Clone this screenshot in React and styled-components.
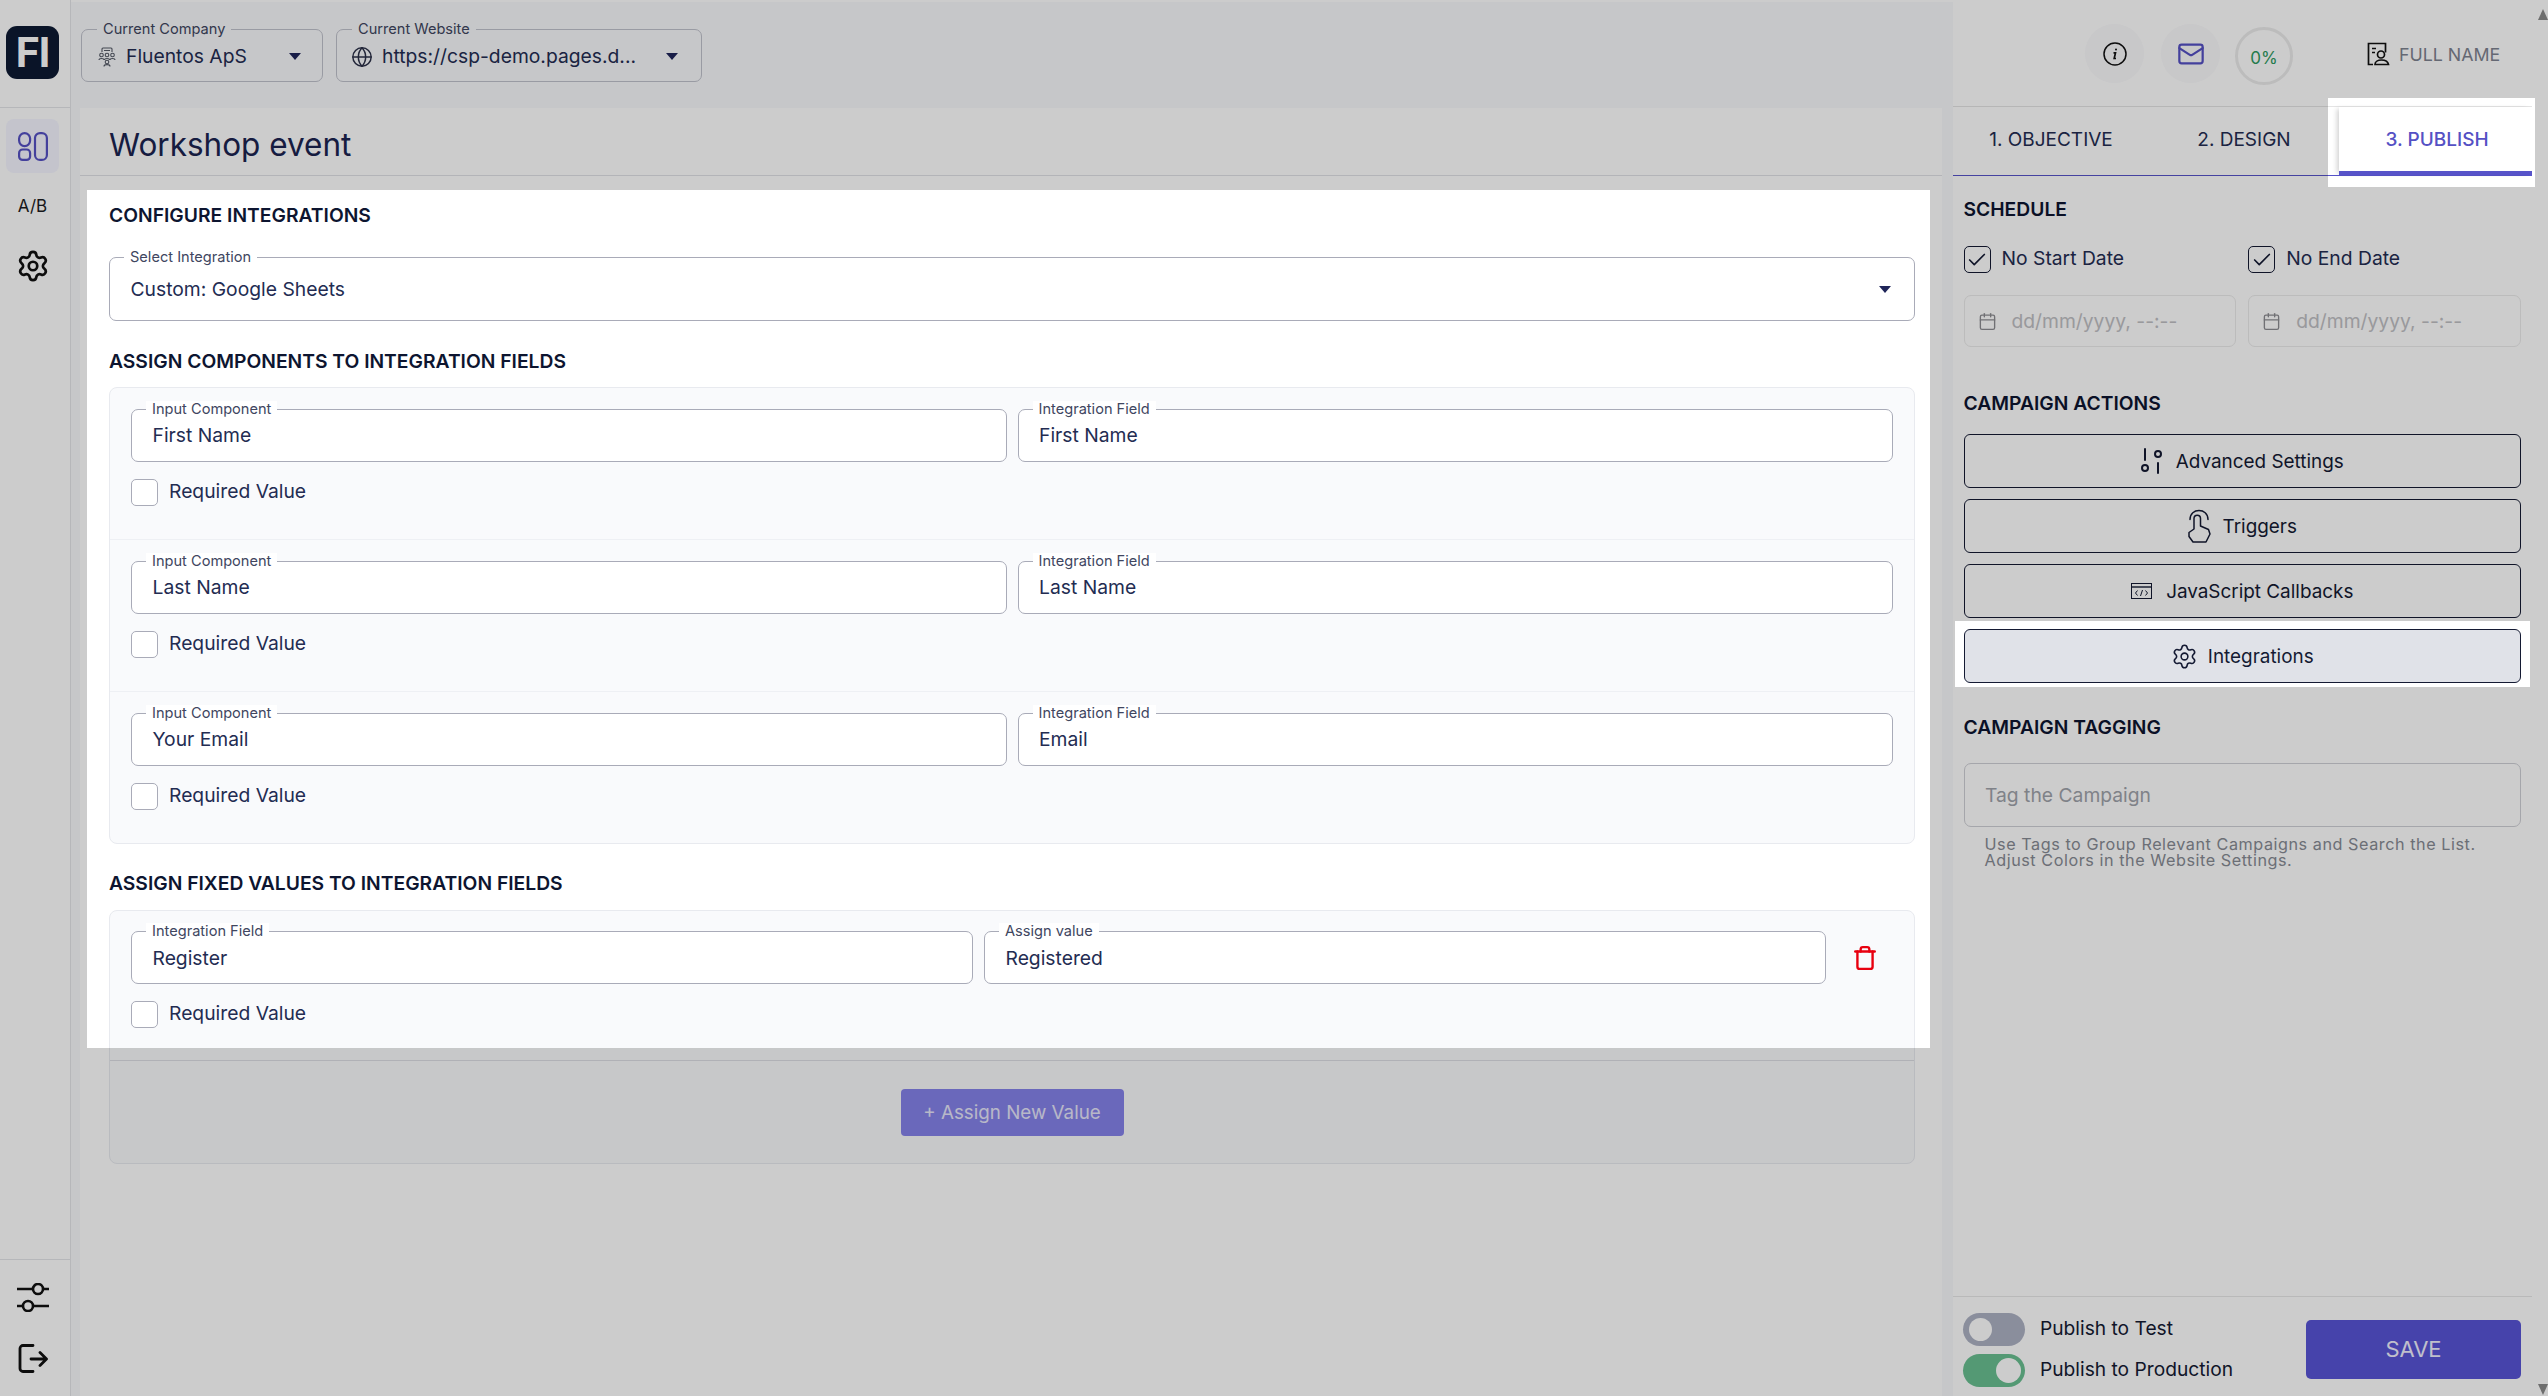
import React from 'react'
import styled, { createGlobalStyle } from 'styled-components'
import { Settings, Globe, Calendar, Mail, Trash, Check } from 'lucide-react'

const GlobalStyle = createGlobalStyle`
  html, body {
    margin: 0;
    padding: 0;
    width: 2548px;
    height: 1396px;
    overflow: hidden;
    background: #fff;
    font-family: Inter, "Noto Sans", sans-serif;
    color: #232c52;
  }
  * { box-sizing: border-box; }
`

const Page = styled.div`
  display: flex;
  width: 2548px;
  height: 1396px;
`

const Dimmer = styled.div`
  position: fixed;
  inset: 0;
  background: rgba(0, 0, 0, 0.2);
  pointer-events: none;
  clip-path: path(evenodd, "M0 0H2548V1396H0Z M87 190H1930V1048H87Z M2328 98H2535V187H2328Z M1955 621H2530V687H1955Z");
`

/* left rail */
const Rail = styled.nav`
  width: 71px;
  flex: none;
  display: flex;
  flex-direction: column;
  background: #fff;
  border-right: 1px solid #e4e5e9;
`

const LogoRow = styled.div`
  height: 108px;
  padding: 26px 0 0 6px;
  border-bottom: 1px solid #e4e5e9;
`

const Logo = styled.div`
  width: 53px;
  height: 53px;
  border-radius: 11px;
  background: #0d1a33;
  color: #fff;
  font-size: 41px;
  font-weight: 700;
  line-height: 53px;
  text-align: center;
  letter-spacing: -1px;
`

const RailItems = styled.div`
  flex: 1;
  display: flex;
  flex-direction: column;
  align-items: flex-start;
  padding: 11px 0 0 6px;
`

const RailButton = styled.div`
  width: 53px;
  height: ${p => p.$h || 54}px;
  margin-bottom: ${p => p.$mb || 0}px;
  display: flex;
  align-items: center;
  justify-content: center;
  border-radius: 8px;
  background: ${p => (p.$active ? '#f5f6ff' : 'transparent')};
  color: #1c1c22;
  font-size: 17px;
`

const RailBottom = styled.div`
  height: 137px;
  display: flex;
  flex-direction: column;
  align-items: center;
  gap: 32px;
  padding: 23px 4px 0 0;
  border-top: 1px solid #e4e5e9;
`

/* middle column */
const Middle = styled.div`
  flex: none;
  width: 1882px;
  display: flex;
  flex-direction: column;
  margin-top: 2px;
  background: #f8f9fc;
`

const TopBar = styled.header`
  height: 106px;
  flex: none;
  display: flex;
  gap: 13px;
  padding: 27px 0 0 10px;
`

const Field = styled.div`
  position: relative;
  display: flex;
  align-items: center;
  width: ${p => p.$w || '100%'};
  height: ${p => p.$h || 53}px;
  padding-left: ${p => p.$pl || 20.5}px;
  border: 1.5px solid ${p => p.$line || '#a9abb8'};
  border-radius: 7px;
  background: ${p => p.$bg || '#fff'};
  font-size: 19.3px;
  color: #232c52;
`

const FieldLabel = styled.label`
  position: absolute;
  top: -9px;
  left: ${p => p.$left || 14}px;
  padding: 0 6px;
  background: ${p => p.$bg || '#fff'};
  font-size: 14.6px;
  line-height: 16px;
  color: #40465f;
`

const Caret = styled.span`
  position: absolute;
  right: ${p => p.$right}px;
  top: 50%;
  margin-top: -3px;
  border-left: 6.5px solid transparent;
  border-right: 6.5px solid transparent;
  border-top: 7.5px solid #1f2559;
`

const FieldIcon = styled.span`
  display: flex;
  margin-right: ${p => p.$mr}px;
  margin-top: 2px;
`

const Card = styled.main`
  flex: 1;
  margin: 0 11px 0 9px;
  background: #fff;
  min-height: 0;
`

const CardHead = styled.div`
  height: 68px;
  display: flex;
  align-items: center;
  padding: 5px 0 0 29px;
  border-bottom: 1px solid #e0e1e6;
`

const Title = styled.h1`
  margin: 0;
  font-size: 31.5px;
  font-weight: 400;
  color: #1b2450;
`

const CardBody = styled.div`
  padding: 0 27px 0 29px;
`

const SectionTitle = styled.h2`
  margin: ${p => p.$mt}px 0 ${p => p.$mb}px;
  font-size: 19.3px;
  line-height: 24px;
  font-weight: 600;
  color: #0d1530;
`

const Panel = styled.section`
  border: 1px solid #e8eaef;
  border-radius: 8px;
  background: #f9fafc;
`

const AssignRow = styled.div`
  padding: 20.5px 21px ${p => (p.$last ? 32 : 33.5)}px;
  border-bottom: ${p => (p.$divided ? '1px solid #eef0f4' : 'none')};
`

const PairGrid = styled.div`
  display: grid;
  grid-template-columns: ${p => p.$cols || '1fr 1fr'};
  gap: 11px;
  align-items: center;
  margin-bottom: 17px;
`

const TrashWrap = styled.button`
  display: flex;
  justify-content: center;
  padding: 0 0 0 2px;
  border: 0;
  background: none;
  color: #e8000f;
`

const CheckRow = styled.label`
  display: flex;
  align-items: center;
  gap: 11px;
  height: 27px;
  font-size: 19.3px;
  color: #232c52;
`

const CheckText = styled.span`
  margin-top: -2.5px;
`

const CheckBox = styled.span`
  width: 27px;
  height: 27px;
  flex: none;
  display: flex;
  align-items: center;
  justify-content: center;
  border: 1.5px solid ${p => (p.$on ? '#141a33' : '#a9abb8')};
  border-radius: 5px;
  background: ${p => (p.$on ? 'transparent' : '#fff')};
`

const AddArea = styled.div`
  display: flex;
  justify-content: center;
  padding: 28px 0 27px;
  border-top: 1px solid #dcdee4;
`

const AddButton = styled.button`
  width: 223px;
  height: 47px;
  border: 0;
  border-radius: 4px;
  background: #8582ea;
  color: #e6e6fa;
  font-family: inherit;
  font-size: 18.8px;
`

/* right column */
const Side = styled.aside`
  flex: none;
  width: 595px;
  display: flex;
  flex-direction: column;
  background: #fff;
  position: relative;
`

const SideTop = styled.div`
  height: 107px;
  flex: none;
  margin-right: 16px;
  padding: 24px 0 0 132px;
  display: flex;
  align-items: flex-start;
  border-bottom: 1.5px solid #e4e4e4;
`

const RoundIcon = styled.div`
  width: 59px;
  height: 59px;
  margin-right: 17px;
  display: flex;
  align-items: center;
  justify-content: center;
  border-radius: 50%;
  background: #fafafc;
`

const Progress = styled.div`
  width: 58px;
  height: 58px;
  margin: 3px 0 0 -2px;
  padding-top: 4px;
  display: flex;
  align-items: center;
  justify-content: center;
  border: 3px solid #ececec;
  border-radius: 50%;
  color: #2d9a60;
  font-size: 17px;
`

const UserBox = styled.div`
  margin: 18px 0 0 74px;
  display: flex;
  align-items: center;
  gap: 9px;
  font-size: 17.8px;
  color: #7e8290;
`

const Tabs = styled.div`
  height: 69px;
  flex: none;
  margin-right: 16px;
  display: grid;
  grid-template-columns: repeat(3, 1fr);
  border-bottom: 1.5px solid #5753c9;
`

const Tab = styled.div`
  display: flex;
  align-items: center;
  justify-content: center;
  padding-left: 3px;
  font-size: 19px;
  font-weight: ${p => (p.$active ? 500 : 400)};
  color: ${p => (p.$active ? '#5551c4' : '#232c52')};
  border-bottom: 4px solid ${p => (p.$active ? '#5753c9' : 'transparent')};
  box-shadow: ${p => (p.$active ? '-4px 0 5px -2px rgba(0, 0, 0, 0.18)' : 'none')};
`

const SideBody = styled.div`
  flex: 1;
  padding: 0 27px 0 10.5px;
`

const TwoCol = styled.div`
  display: grid;
  grid-template-columns: 1fr 1fr;
  gap: 12px;
  margin-bottom: ${p => p.$mb || 0}px;
`

const DateBox = styled.div`
  height: 52px;
  display: flex;
  align-items: center;
  gap: 15px;
  padding-left: 13px;
  border: 1.5px solid #ebebeb;
  border-radius: 7px;
  font-size: 19.3px;
  color: #c0c0c4;
`

const ActionList = styled.div`
  display: flex;
  flex-direction: column;
  gap: 11px;
`

const ActionButton = styled.button`
  height: 54px;
  display: flex;
  align-items: center;
  justify-content: center;
  gap: ${p => p.$gap || 14}px;
  padding-bottom: 1px;
  border: 1.5px solid #141a33;
  border-radius: 6px;
  background: ${p => (p.$active ? '#e0e2e8' : '#fff')};
  font-family: inherit;
  font-size: 18.9px;
  color: #141a33;
`

const TagInput = styled.div`
  height: 64px;
  display: flex;
  align-items: center;
  padding-left: 20.5px;
  border: 1.5px solid #cfd0d6;
  border-radius: 7px;
  font-size: 19.3px;
  color: #9fa3ab;
`

const Help = styled.p`
  margin: 9px 0 0;
  padding-left: 21px;
  font-size: 16.2px;
  line-height: 16.5px;
  letter-spacing: 0.55px;
  color: #878b94;
`

const SideFoot = styled.footer`
  height: 100px;
  flex: none;
  margin-right: 16px;
  padding: 16px 11px 0 10px;
  display: flex;
  justify-content: space-between;
  border-top: 1.5px solid #e8e8e8;
`

const ToggleList = styled.div`
  display: flex;
  flex-direction: column;
  gap: 8px;
`

const ToggleRow = styled.div`
  display: flex;
  align-items: center;
  gap: 15px;
  font-size: 19.2px;
  color: #141a33;
`

const ToggleText = styled.span`
  margin-top: -4px;
`

const Toggle = styled.span`
  width: 62px;
  height: 33px;
  padding: 0 ${p => (p.$on ? 4 : 6)}px;
  display: flex;
  align-items: center;
  justify-content: ${p => (p.$on ? 'flex-end' : 'flex-start')};
  border-radius: 17px;
  background: ${p => (p.$on ? '#6ac091' : '#adb2c4')};
  &::after {
    content: '';
    width: ${p => (p.$on ? 25 : 23)}px;
    height: ${p => (p.$on ? 25 : 23)}px;
    border-radius: 50%;
    background: #fff;
  }
`

const SaveButton = styled.button`
  width: 215px;
  height: 59px;
  margin-top: 7px;
  padding-bottom: 2px;
  border: 0;
  border-radius: 5px;
  background: #5854d6;
  color: #f0f0ff;
  font-family: inherit;
  font-size: 22px;
`

const ScrollArrow = styled.span`
  position: absolute;
  right: 0;
  ${p => (p.$down ? 'bottom: 1px;' : 'top: 9px;')}
  border-left: 5.5px solid transparent;
  border-right: 5.5px solid transparent;
  ${p => (p.$down ? 'border-top: 11px solid #8a8a8a;' : 'border-bottom: 11px solid #8a8a8a;')}
`

const LayoutIcon = () => (
  <svg width="30" height="29" viewBox="0 0 30 29" fill="none" stroke="#5551c4" strokeWidth="2.2">
    <rect x="1.1" y="1.1" width="11" height="13" rx="5.5" />
    <rect x="1.1" y="17.5" width="11" height="10.4" rx="3.5" />
    <rect x="17" y="1.1" width="11.9" height="26.8" rx="5" />
  </svg>
)

const SlidersIcon = () => (
  <svg width="32" height="29" viewBox="0 0 32 29" fill="none" stroke="#111" strokeWidth="2.6">
    <path d="M0 6h16M26 6h6M0 23h6M16 23h16" />
    <circle cx="21" cy="6" r="5" />
    <circle cx="11" cy="23" r="5" />
  </svg>
)

const LogoutIcon = () => (
  <svg width="30" height="29" viewBox="0 0 30 29" fill="none" stroke="#111" strokeWidth="2.8" strokeLinecap="round" strokeLinejoin="round">
    <path d="M15 1.5H5a3 3 0 0 0-3 3v20a3 3 0 0 0 3 3h10" />
    <path d="M13 15h15M22 8.5l6.500 6.500-6.500 6.500" />
  </svg>
)

const CompanyIcon = () => (
  <svg width="18" height="20" viewBox="0 0 18 20" fill="none" stroke="#555a66" strokeWidth="1.1">
    <path d="M4 5V2a1 1 0 0 1 1-1h8a1 1 0 0 1 1 1v3M6 3.500h6" />
    <circle cx="3.500" cy="8" r="1.800" />
    <circle cx="9" cy="8" r="1.800" />
    <circle cx="14.500" cy="8" r="1.800" />
    <path d="M1 13c0-2 5-2 5 0M6.500 13c0-2 5-2 5 0M12 13c0-2 5-2 5 0" />
    <circle cx="9" cy="15" r="1.800" />
    <path d="M6 19.500c0-2.500 6-2.500 6 0" />
  </svg>
)

const InfoIcon = () => (
  <svg width="24" height="24" viewBox="0 0 24 24" fill="none" stroke="#111" strokeWidth="1.5">
    <circle cx="12" cy="12" r="11" />
    <path d="M10.500 10.800h2l-1.300 5.700h1.800" strokeWidth="1.700" />
    <circle cx="13" cy="7.500" r="1" fill="#111" stroke="none" />
  </svg>
)

const PersonDocIcon = () => (
  <svg width="23" height="24" viewBox="0 0 23 24" fill="none" stroke="#111" strokeWidth="1.7">
    <path d="M6 22.500H1.500v-21h17v9" />
    <path d="M5 6.500h4M5 10.500h3" />
    <circle cx="14" cy="12.500" r="3.500" />
    <path d="M8 22.500c0-6 12.500-6 13.500 0z" />
  </svg>
)

const TuneIcon = () => (
  <svg width="21" height="26" viewBox="0 0 21 26" fill="none" stroke="#141a33" strokeWidth="2">
    <path d="M4 1v11M17 15v10" strokeLinecap="round" />
    <circle cx="4" cy="20" r="3" />
    <circle cx="17" cy="6" r="3" />
  </svg>
)

const TapIcon = () => (
  <svg width="23" height="34" viewBox="0 0 23 34" fill="none" stroke="#141a33" strokeWidth="1.5" strokeLinejoin="round" strokeLinecap="round">
    <path d="M2 10.500C2 -1.500 20 -1.500 20 10.500" />
    <path d="M6 20V9.500a3.200 3.200 0 0 1 6.500 0V17L20.500 20.500 22 25 18 33H5L1 27.500V23.500L6 20Z" />
  </svg>
)

const CodeWindowIcon = () => (
  <svg width="21" height="16" viewBox="0 0 21 16" fill="none" stroke="#141a33" strokeWidth="1">
    <rect x="0.500" y="0.500" width="20" height="15" />
    <path d="M0.500 4h20" strokeWidth="1.400" />
    <path d="M6.500 7.500l-2 2.500 2 2.500M14.500 7.500l2 2.500-2 2.500M11.500 7l-2 6" />
  </svg>
)

const assignRows = [
  ['First Name', 'First Name'],
  ['Last Name', 'Last Name'],
  ['Your Email', 'Email'],
]

const App = () => {
  return (
    <Page>
      <GlobalStyle />

      <Rail>
        <LogoRow><Logo>FI</Logo></LogoRow>
        <RailItems>
          <RailButton $active $mb={5}><LayoutIcon /></RailButton>
          <RailButton $h={56} $mb={2}>A/B</RailButton>
          <RailButton $h={60}><Settings size={34} strokeWidth={1.9} color="#111" /></RailButton>
        </RailItems>
        <RailBottom>
          <SlidersIcon />
          <LogoutIcon />
        </RailBottom>
      </Rail>

      <Middle>
        <TopBar>
          <Field $w="242px" $pl={16} $bg="#f8f9fc" $line="#c0c2cc">
            <FieldLabel $bg="#f8f9fc" $left={15}>Current Company</FieldLabel>
            <FieldIcon $mr={10}><CompanyIcon /></FieldIcon>
            Fluentos ApS
            <Caret $right={21.5} />
          </Field>
          <Field $w="366px" $pl={14} $bg="#f8f9fc" $line="#c0c2cc">
            <FieldLabel $bg="#f8f9fc" $left={15}>Current Website</FieldLabel>
            <FieldIcon $mr={9}><Globe size={22} strokeWidth={1.6} color="#2b3048" /></FieldIcon>
            https://csp-demo.pages.d...
            <Caret $right={23} />
          </Field>
        </TopBar>

        <Card>
          <CardHead><Title>Workshop event</Title></CardHead>
          <CardBody>
            <SectionTitle $mt={27} $mb={30}>CONFIGURE INTEGRATIONS</SectionTitle>
            <Field $h={64}>
              <FieldLabel>Select Integration</FieldLabel>
              Custom: Google Sheets
              <Caret $right={23} />
            </Field>

            <SectionTitle $mt={28} $mb={14}>ASSIGN COMPONENTS TO INTEGRATION FIELDS</SectionTitle>
            <Panel>
              {assignRows.map(([component, field], i) => (
                <AssignRow key={component} $divided={i < assignRows.length - 1}>
                  <PairGrid>
                    <Field>
                      <FieldLabel>Input Component</FieldLabel>
                      {component}
                    </Field>
                    <Field>
                      <FieldLabel>Integration Field</FieldLabel>
                      {field}
                    </Field>
                  </PairGrid>
                  <CheckRow><CheckBox /><CheckText>Required Value</CheckText></CheckRow>
                </AssignRow>
              ))}
            </Panel>

            <SectionTitle $mt={26.5} $mb={15}>ASSIGN FIXED VALUES TO INTEGRATION FIELDS</SectionTitle>
            <Panel>
              <AssignRow $last>
                <PairGrid $cols="842px 842px 53px">
                  <Field>
                    <FieldLabel>Integration Field</FieldLabel>
                    Register
                  </Field>
                  <Field>
                    <FieldLabel>Assign value</FieldLabel>
                    Registered
                  </Field>
                  <TrashWrap><Trash size={26} strokeWidth={2.2} /></TrashWrap>
                </PairGrid>
                <CheckRow><CheckBox /><CheckText>Required Value</CheckText></CheckRow>
              </AssignRow>
              <AddArea><AddButton>+ Assign New Value</AddButton></AddArea>
            </Panel>
          </CardBody>
        </Card>
      </Middle>

      <Side>
        <ScrollArrow />
        <ScrollArrow $down />
        <SideTop>
          <RoundIcon><InfoIcon /></RoundIcon>
          <RoundIcon><Mail size={28} strokeWidth={1.9} color="#5551c4" /></RoundIcon>
          <Progress>0%</Progress>
          <UserBox><PersonDocIcon />FULL NAME</UserBox>
        </SideTop>

        <Tabs>
          <Tab>1. OBJECTIVE</Tab>
          <Tab>2. DESIGN</Tab>
          <Tab $active>3. PUBLISH</Tab>
        </Tabs>

        <SideBody>
          <SectionTitle $mt={21} $mb={25}>SCHEDULE</SectionTitle>
          <TwoCol $mb={22}>
            <CheckRow><CheckBox $on><Check size={22} strokeWidth={1.8} color="#141a33" /></CheckBox><CheckText>No Start Date</CheckText></CheckRow>
            <CheckRow><CheckBox $on><Check size={22} strokeWidth={1.8} color="#141a33" /></CheckBox><CheckText>No End Date</CheckText></CheckRow>
          </TwoCol>
          <TwoCol>
            <DateBox><Calendar size={19} strokeWidth={1.7} color="#8d8d92" />dd/mm/yyyy, --:--</DateBox>
            <DateBox><Calendar size={19} strokeWidth={1.7} color="#8d8d92" />dd/mm/yyyy, --:--</DateBox>
          </TwoCol>

          <SectionTitle $mt={44} $mb={19}>CAMPAIGN ACTIONS</SectionTitle>
          <ActionList>
            <ActionButton><TuneIcon />Advanced Settings</ActionButton>
            <ActionButton $gap={12}><TapIcon />Triggers</ActionButton>
            <ActionButton><CodeWindowIcon />JavaScript Callbacks</ActionButton>
            <ActionButton $active $gap={10}><Settings size={27} strokeWidth={1.4} />Integrations</ActionButton>
          </ActionList>

          <SectionTitle $mt={31.5} $mb={24}>CAMPAIGN TAGGING</SectionTitle>
          <TagInput>Tag the Campaign</TagInput>
          <Help>
            Use Tags to Group Relevant Campaigns and Search the List.<br />
            Adjust Colors in the Website Settings.
          </Help>
        </SideBody>

        <SideFoot>
          <ToggleList>
            <ToggleRow><Toggle /><ToggleText>Publish to Test</ToggleText></ToggleRow>
            <ToggleRow><Toggle $on /><ToggleText>Publish to Production</ToggleText></ToggleRow>
          </ToggleList>
          <SaveButton>SAVE</SaveButton>
        </SideFoot>
      </Side>

      <Dimmer />
    </Page>
  )
}

export default App
